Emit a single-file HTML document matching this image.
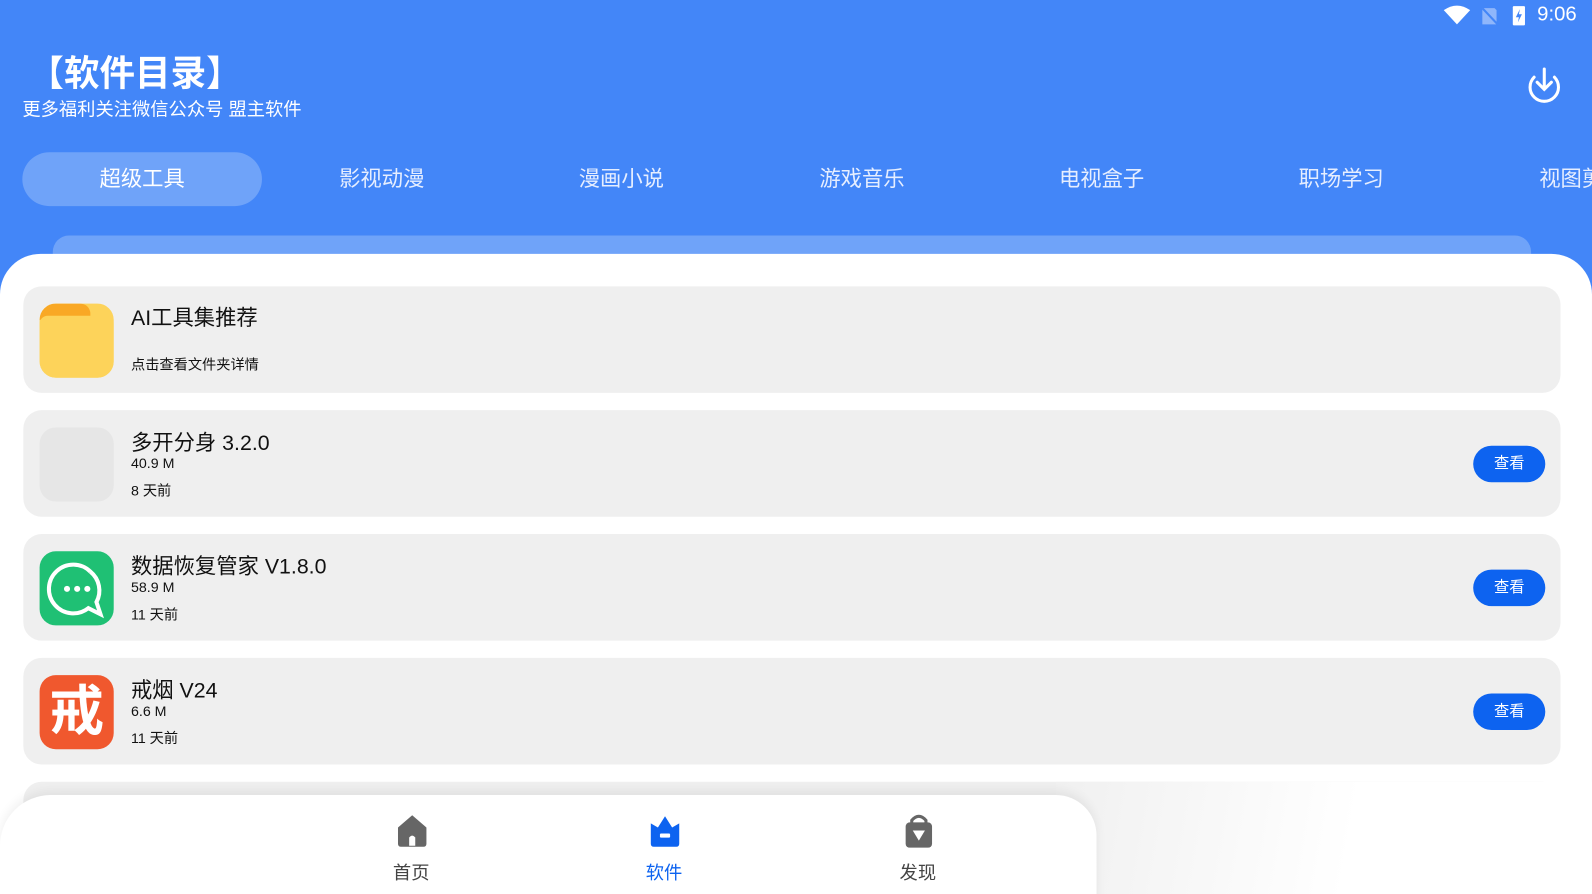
<!DOCTYPE html>
<html style="width:1592px;height:894px;overflow:hidden"><head><meta charset="utf-8"><style>
*{margin:0;padding:0;box-sizing:border-box}
body{width:1592px;height:894px;overflow:hidden;background:#4386f8;font-family:"Liberation Sans","Noto Sans CJK SC",sans-serif;position:relative}
#w{position:absolute;left:0;top:0;width:1568px;height:881px;transform:scale(1.0153);transform-origin:0 0;overflow:hidden}
.abs{position:absolute}
.title{left:28px;top:44px;font-size:35px;font-weight:bold;color:#fff}
.sub{left:22px;top:94px;font-size:18px;color:#fff}
.tab{top:150px;height:53px;width:236px;line-height:53px;text-align:center;color:#e6eeff;font-size:21px}
.sel{background:#6fa3f9;border-radius:27px;color:#fff}
.bar{left:52px;top:232px;width:1456px;height:30px;background:#6fa3f9;border-radius:16px 16px 0 0}
.sheet{left:0;top:250px;width:1568px;height:640px;background:#fff;border-radius:40px 40px 0 0}
.card{left:23px;width:1514px;height:105px;background:#efefef;border-radius:18px}
.icon{left:16px;top:17px;width:73px;height:73px;border-radius:16px;overflow:hidden}
.name{left:106px;font-size:21px;color:#111}
.meta{left:106px;font-size:14px;color:#111}
.btn{right:15px;top:35px;width:71px;height:36px;border-radius:18px;background:#0d63f0;color:#fff;font-size:15px;text-align:center;line-height:36px}
.nav{left:0;top:783px;width:1080px;height:120px;background:#fff;border-radius:50px 40px 0 0;box-shadow:0 -4px 10px rgba(0,0,0,.06)}
.fade{left:1040px;top:770px;width:528px;height:120px;background:linear-gradient(100deg,#f0f0f0,#fff 55%)}
.nl{top:846px;font-size:18px;color:#444;width:60px;text-align:center}
</style></head><body><div id="w">
<div class="abs" style="left:1514px;top:3px;color:#fff;font-size:20px;">9:06</div>
<svg class="abs" style="left:1420px;top:4px" width="90" height="22" viewBox="0 0 90 22"><path d="M2 6 Q15 -3 28 6 L15 20Z" fill="#fff"/><path d="M40 4h12l2 2v14H40z" fill="#8fb6fb"/><line x1="40" y1="4" x2="56" y2="21" stroke="#4386f8" stroke-width="2"/><rect x="70" y="2" width="12" height="19" rx="1" fill="#fff"/><path d="M77 5l-4 8h3l-1 5 4-8h-3z" fill="#4386f8"/></svg>
<div class="abs title">【软件目录】</div>
<div class="abs sub">更多福利关注微信公众号 盟主软件</div>
<svg class="abs" style="left:1502px;top:64px" width="38" height="38" viewBox="0 0 38 38" fill="none" stroke="#fff" stroke-width="3" stroke-linecap="round"><path d="M9 12 A14 14 0 1 0 29 12"/><path d="M19 4v20M12 17l7 7 7-7"/></svg>
<div class="abs tab sel" style="left:22px">超级工具</div>
<div class="abs tab" style="left:258px">影视动漫</div>
<div class="abs tab" style="left:494px">漫画小说</div>
<div class="abs tab" style="left:731px">游戏音乐</div>
<div class="abs tab" style="left:967px">电视盒子</div>
<div class="abs tab" style="left:1203px">职场学习</div>
<div class="abs tab" style="left:1440px">视图剪辑</div>
<div class="abs bar"></div>
<div class="abs sheet"></div>

<div class="abs card" style="top:282px">
 <div class="abs icon" style="background:#fdd35a"><div class="abs" style="left:0;top:0;width:50px;height:16px;background:#f9a825;border-radius:0 10px 0 0"></div><div class="abs" style="left:0;top:12px;width:73px;height:61px;background:#fdd35a;border-radius:8px 8px 0 0"></div></div>
 <div class="abs name" style="top:15px">AI工具集推荐</div>
 <div class="abs meta" style="top:67px">点击查看文件夹详情</div>
</div>
<div class="abs card" style="top:404px">
 <div class="abs icon" style="background:#e6e6e6"></div>
 <div class="abs name" style="top:16px">多开分身 3.2.0</div>
 <div class="abs meta" style="top:44px">40.9 M</div>
 <div class="abs meta" style="top:69px">8 天前</div>
 <div class="abs btn">查看</div>
</div>
<div class="abs card" style="top:526px">
 <div class="abs icon" style="background:#1fc074"><svg width="73" height="73" viewBox="0 0 73 73"><path d="M50 20 A24 24 0 1 0 48 56 L60 62 L56 50 A24 24 0 0 0 50 20" fill="none" stroke="#fff" stroke-width="4"/><circle cx="27" cy="37" r="3" fill="#fff"/><circle cx="37" cy="37" r="3" fill="#fff"/><circle cx="47" cy="37" r="3" fill="#fff"/></svg></div>
 <div class="abs name" style="top:16px">数据恢复管家 V1.8.0</div>
 <div class="abs meta" style="top:44px">58.9 M</div>
 <div class="abs meta" style="top:69px">11 天前</div>
 <div class="abs btn">查看</div>
</div>
<div class="abs card" style="top:648px">
 <div class="abs icon" style="background:#f0582e;color:#fff;font-size:54px;font-weight:bold;text-align:center;line-height:73px">戒</div>
 <div class="abs name" style="top:16px">戒烟 V24</div>
 <div class="abs meta" style="top:44px">6.6 M</div>
 <div class="abs meta" style="top:69px">11 天前</div>
 <div class="abs btn">查看</div>
</div>
<div class="abs card" style="top:770px"></div>
<div class="abs fade"></div>
<div class="abs nav"></div>
<svg class="abs" style="left:389px;top:801px" width="34" height="34" viewBox="0 0 34 34"><path d="M3 14 L17 2 L31 14 V30 Q31 33 28 33 H6 Q3 33 3 30Z" fill="#666"/><path d="M14 32V24Q17 20 20 24V32Z" fill="#fff"/></svg>
<svg class="abs" style="left:638px;top:801px" width="34" height="34" viewBox="0 0 34 34"><path d="M3 10 L10 14 L17 3 L24 14 L31 10 V30 Q31 33 28 33 H6 Q3 33 3 30Z" fill="#0d63f0"/><rect x="12" y="20" width="10" height="4" rx="1" fill="#fff"/></svg>
<svg class="abs" style="left:888px;top:801px" width="34" height="34" viewBox="0 0 34 34"><path d="M10 10V7Q17 -1 24 7V10" fill="none" stroke="#666" stroke-width="3"/><rect x="4" y="9" width="26" height="25" rx="4" fill="#666"/><path d="M11 17H23L17 27Z" fill="#fff"/></svg>
<div class="abs nl" style="left:375px">首页</div>
<div class="abs nl" style="left:624px;color:#0d63f0">软件</div>
<div class="abs nl" style="left:874px">发现</div>
</div></body></html>
